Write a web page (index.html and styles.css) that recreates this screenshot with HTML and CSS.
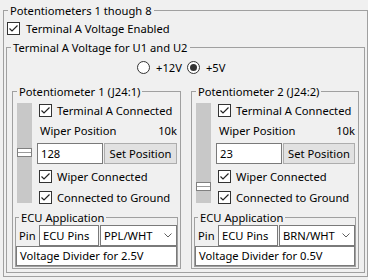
FILE: index.html
```html
<!DOCTYPE html>
<html>
<head>
<meta charset="utf-8">
<link rel="stylesheet" href="styles.css">
</head>
<body>
<fieldset class="grp outer">
  <legend>Potentiometers 1 though 8</legend>
  <div class="chk top-chk"><span class="box"><svg width="11" height="11" viewBox="0 0 11 11"><polyline points="1.5,5.5 4,8 9.5,2.5"/></svg></span><span>Terminal A Voltage Enabled</span></div>
  <fieldset class="grp mid">
    <legend>Terminal A Voltage for U1 and U2</legend>
    <div class="radios">
      <div class="radio"><svg width="13" height="13" viewBox="0 0 13 13"><circle class="ring" cx="6.5" cy="6.5" r="6"/></svg><span>+12V</span></div>
      <div class="radio"><svg width="13" height="13" viewBox="0 0 13 13"><circle class="ring" cx="6.5" cy="6.5" r="6"/><circle class="dot" cx="6.5" cy="6.5" r="3.5"/></svg><span>+5V</span></div>
    </div>
    <div class="pots">
      <fieldset class="grp pot">
        <legend>Potentiometer 1 (J24:1)</legend>
        <div class="pot-body">
          <div class="slider"><span class="thumb" style="top:45px"></span></div>
          <div class="ctrls">
            <div class="chk"><span class="box"><svg width="11" height="11" viewBox="0 0 11 11"><polyline points="1.5,5.5 4,8 9.5,2.5"/></svg></span><span>Terminal A Connected</span></div>
            <div class="wiper"><span>Wiper Position</span><span>10k</span></div>
            <div class="setrow"><span class="tb val">128</span><span class="btn">Set Position</span></div>
            <div class="chk gap5"><span class="box"><svg width="11" height="11" viewBox="0 0 11 11"><polyline points="1.5,5.5 4,8 9.5,2.5"/></svg></span><span>Wiper Connected</span></div>
            <div class="chk gap6"><span class="box"><svg width="11" height="11" viewBox="0 0 11 11"><polyline points="1.5,5.5 4,8 9.5,2.5"/></svg></span><span>Connected to Ground</span></div>
          </div>
        </div>
        <fieldset class="grp ecu">
          <legend>ECU Application</legend>
          <div class="pinrow"><span class="pinlbl">Pin</span><span class="tb pins">ECU Pins</span><span class="combo"><span>PPL/WHT</span><svg width="8" height="5" viewBox="0 0 8 5"><polyline points="0.5,0.5 4,4 7.5,0.5"/></svg></span></div>
          <div class="tb desc">Voltage Divider for 2.5V</div>
        </fieldset>
      </fieldset>
      <fieldset class="grp pot">
        <legend>Potentiometer 2 (J24:2)</legend>
        <div class="pot-body">
          <div class="slider"><span class="thumb" style="top:79px"></span></div>
          <div class="ctrls">
            <div class="chk"><span class="box"><svg width="11" height="11" viewBox="0 0 11 11"><polyline points="1.5,5.5 4,8 9.5,2.5"/></svg></span><span>Terminal A Connected</span></div>
            <div class="wiper"><span>Wiper Position</span><span>10k</span></div>
            <div class="setrow"><span class="tb val">23</span><span class="btn">Set Position</span></div>
            <div class="chk gap5"><span class="box"><svg width="11" height="11" viewBox="0 0 11 11"><polyline points="1.5,5.5 4,8 9.5,2.5"/></svg></span><span>Wiper Connected</span></div>
            <div class="chk gap6"><span class="box"><svg width="11" height="11" viewBox="0 0 11 11"><polyline points="1.5,5.5 4,8 9.5,2.5"/></svg></span><span>Connected to Ground</span></div>
          </div>
        </div>
        <fieldset class="grp ecu">
          <legend>ECU Application</legend>
          <div class="pinrow"><span class="pinlbl">Pin</span><span class="tb pins">ECU Pins</span><span class="combo"><span>BRN/WHT</span><svg width="8" height="5" viewBox="0 0 8 5"><polyline points="0.5,0.5 4,4 7.5,0.5"/></svg></span></div>
          <div class="tb desc">Voltage Divider for 0.5V</div>
        </fieldset>
      </fieldset>
    </div>
  </fieldset>
</fieldset>
</body>
</html>
```

FILE: styles.css
```css
* { box-sizing: border-box; }
html, body { margin: 0; padding: 0; }
body {
  width: 368px;
  height: 280px;
  overflow: hidden;
  background: #f0f0f0;
  font-family: "Noto Sans", "DejaVu Sans", sans-serif;
  font-size: 11.2px;
  line-height: 15px;
  color: #000;
}
.grp {
  border: 1px solid #a0a0a0;
  margin: 0;
  padding: 0;
  min-width: 0;
}
.grp > legend {
  padding: 0 2px;
  margin-left: 4px;
  height: 15px;
  line-height: 15px;
  white-space: nowrap;
}
.outer { margin: 3px 0 0 3px; padding-bottom: 3px; }
.mid { margin: 4px 2px 0 2px; }

.chk { display: flex; align-items: center; gap: 5px; height: 15px; white-space: nowrap; }
.top-chk { margin: 3px 0 0 3px; gap: 6px; }
.box {
  width: 13px; height: 13px;
  border: 1px solid #333;
  background: #fff;
  display: block;
  flex: none;
}
.box svg { display: block; }
.box polyline { fill: none; stroke: #222; stroke-width: 1.2; }

.radios { display: flex; gap: 5px; margin-top: 5px; padding-left: 130px; height: 15px; }
.radio { display: flex; align-items: center; gap: 6px; }
.radio svg { display: block; }
.ring { fill: #fff; stroke: #333; stroke-width: 1; }
.dot { fill: #333; }

.pots {
  display: grid;
  grid-template-columns: 169px 168px;
  column-gap: 10px;
  margin: 9px 5px 3px 5px;
}
.pot { padding-bottom: 1px; }
.pot-body { display: flex; margin-top: 4px; }
.slider {
  position: relative;
  width: 15px; height: 100px;
  margin-left: 4px;
  background: #c8c8c8;
  flex: none;
}
.thumb {
  position: absolute;
  left: 0; width: 15px; height: 9px;
  border: 1px solid #808080;
  background: linear-gradient(#fff 0 3px, #9a9a9a 3px 4px, #fff 4px 7px);
}
.ctrls { flex: 1; min-width: 0; margin: 0 3px 0 5px; display: flex; flex-direction: column; }
.ctrls .chk { margin-left: 2px; }
.wiper { display: flex; justify-content: space-between; margin-top: 5px; padding-left: 3px; height: 15px; }
.setrow { display: flex; gap: 1px; margin-top: 5px; height: 21px; }
.tb {
  background: #fff;
  border: 1px solid #7a7a7a;
  padding-left: 3px;
  white-space: nowrap;
  overflow: hidden;
}
.val { width: 66px; line-height: 19px; flex: none; }
.btn {
  flex: 1;
  background: #e1e1e1;
  border: 1px solid #adadad;
  text-align: center;
  line-height: 19px;
  white-space: nowrap;
}
.gap5 { margin-top: 5px; }
.gap6 { margin-top: 6px; }

.ecu { margin: 5px 2px 0 2px; }
.ecu > legend { margin-left: 3px; }
.pinrow { display: flex; gap: 1px; height: 21px; }
.pinlbl { width: 22px; padding-left: 3px; line-height: 21px; flex: none; }
.pins { width: 60px; line-height: 19px; flex: none; }
.combo {
  flex: 1;
  display: flex;
  justify-content: space-between;
  align-items: center;
  background: #fff;
  border: 1px solid #7a7a7a;
  padding: 0 4px 0 3px;
  white-space: nowrap;
}
.combo svg { display: block; }
.combo polyline { fill: none; stroke: #606060; stroke-width: 1; }
.desc { height: 20px; line-height: 18px; }
```
